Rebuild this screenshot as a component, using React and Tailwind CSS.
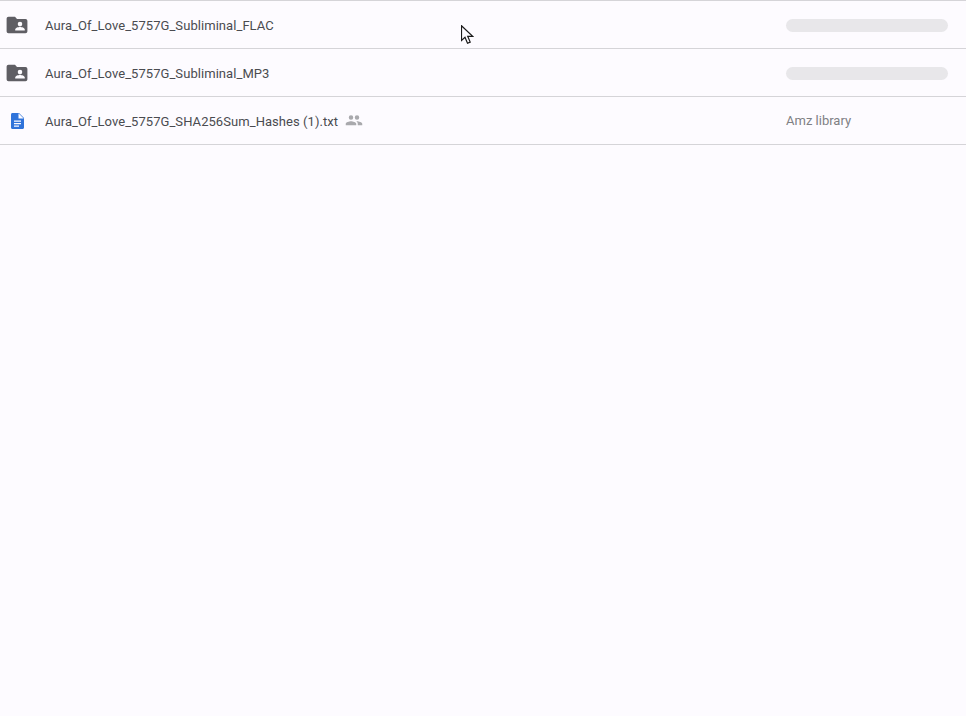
import React from "react";

function SharedFolder() {
  return (
    <svg width="24" height="24" viewBox="0 0 24 24" className="block">
      <path fill="#5f5e64" d="M20.500 6H12l-2-2.200H3.500C2.400 3.800 1.600 4.600 1.600 5.800v12.400c0 1.100.8 2 1.900 2h17c1.100 0 1.900-.9 1.900-2V8c0-1.100-.8-2-1.900-2z" />
      <path fill="#fdfbff" d="M15 8.800a2.300 2.300 0 1 1 0 4.600 2.300 2.300 0 0 1 0-4.600zM10.200 17.600v-1.100c0-1.700 3.200-2.500 4.800-2.500s4.800.8 4.800 2.500v1.100z" />
    </svg>
  );
}

function DocIcon() {
  return (
    <svg width="24" height="24" viewBox="0 0 24 24" className="block">
      <path fill="#2f73da" d="M14 4H7.500C6.600 4 6 4.700 6 5.500v13c0 .8.600 1.500 1.500 1.500h10c.9 0 1.500-.7 1.500-1.500V9l-5-5z" />
      <path fill="#fdfbff" d="M13.500 4.300V9.500h5.200zM9 11.500h7v1.300H9zM9 14h7v1.300H9zM9 16.500h5v1.300H9z" />
    </svg>
  );
}

function People() {
  return (
    <svg width="18" height="18" viewBox="0 0 24 24" className="block">
      <path fill="#a9a9ad" d="M16 11.500a3 3 0 1 0 0-6 3 3 0 0 0 0 6zm-8 0a3 3 0 1 0 0-6 3 3 0 0 0 0 6zm0 2c-2.300 0-7 1.200-7 3.500V19h14v-2c0-2.300-4.700-3.500-7-3.500zm8 0c-.3 0-.6 0-1 .1 1.200.8 2 1.900 2 3.400V19h6v-2c0-2.300-4.700-3.500-7-3.500z" />
    </svg>
  );
}

function Row({ icon, name, shared, children }) {
  return (
    <div className="flex h-12 items-center border-b border-[#d5d4d8]">
      <div className="flex w-[45px] shrink-0 justify-center pr-[11px]">{icon}</div>
      <div className="flex min-w-0 flex-1 items-center pt-[2px]">
        <span className="text-[13px] leading-[18px] font-normal tracking-[0.06px] text-[#4a4b50]">{name}</span>
        {shared && <span className="ml-[7px] -mt-[3px]"><People /></span>}
      </div>
      <div className="w-[180px] shrink-0 pt-[2px]">{children}</div>
    </div>
  );
}

function Pill() {
  return <div className="h-[13px] w-[162px] rounded-full bg-[#e8e7ea]" />;
}

export default function App() {
  return (
    <div className="relative h-[716px] w-[966px] overflow-hidden bg-[#fdfbff] font-['Roboto',sans-serif]">
      <div className="border-t border-[#d5d4d8]">
        <Row icon={<SharedFolder />} name="Aura_Of_Love_5757G_Subliminal_FLAC"><Pill /></Row>
        <Row icon={<SharedFolder />} name="Aura_Of_Love_5757G_Subliminal_MP3"><Pill /></Row>
        <Row icon={<DocIcon />} name="Aura_Of_Love_5757G_SHA256Sum_Hashes (1).txt" shared>
          <span className="block -mt-[2px] text-[13px] leading-[16px] text-[#7f8084]">Amz library</span>
        </Row>
      </div>
      <svg width="13" height="20" viewBox="0 0 13 20" className="absolute left-[461px] top-[25px]">
        <path d="M.5.700V15.500L4 12.300l2.500 6 2.700-1.200-2.500-5.800h5L.5.700z" fill="#fdfbff" stroke="#1a1a1a" strokeWidth="1.200" />
      </svg>
    </div>
  );
}
